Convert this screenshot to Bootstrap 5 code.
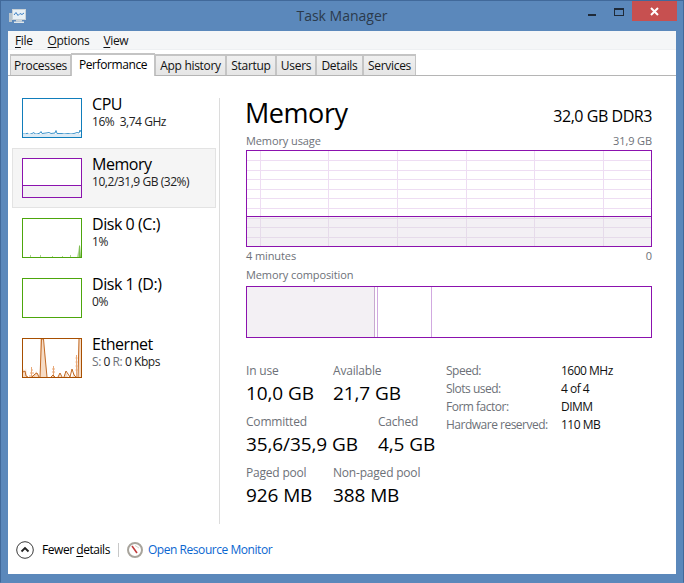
<!DOCTYPE html>
<html lang="en"><head><meta charset="utf-8"><title>Task Manager</title>
<link href="https://cdn.jsdelivr.net/npm/bootstrap@5.3.0/dist/css/bootstrap.min.css" rel="stylesheet">
<style>
html,body{margin:0;height:583px;width:684px;overflow:hidden;background:#5b88bb}
body{font-family:"Open Sans","Noto Sans",sans-serif;font-size:12px;line-height:16px;color:#000;letter-spacing:-.35px}
.tm-frame{height:583px;background:#5b88bb;border:1px solid #41699a;border-bottom-color:#5b88bb;padding:0 7px 8px}
.tm-title{height:30px;position:relative}
.tm-title-text{font-size:14px;color:#2b3a4c;padding-top:5px;line-height:20px;letter-spacing:0}
.tm-appicon{position:absolute;left:1px;top:7px}
.tm-ctl{position:absolute;top:0}
.tm-close{left:624px;top:0;width:45px;height:20px;background:#c75050;color:#fff}
.tm-min{left:580px;top:13px;width:8px;height:2px;background:#1f2a38}
.tm-max{left:606px;top:7px;width:10px;height:8px;border:1px solid #1f2a38;border-top-width:2px}
.tm-client{background:#fff;height:543px;display:flex;flex-direction:column}
.tm-menu{height:19px;background:#f5f6f7;padding:2px 0 0 7px;gap:14px;border-bottom:1px solid #eef0f2;color:#111}
.tm-menu span:nth-child(2){margin-left:1px}
.tm-menu u,.tm-foot u{text-underline-offset:2px}
.tm-tabs{height:26px;padding:3px 0 0 2px;border-bottom:1px solid #b5b5b5;flex-wrap:nowrap;align-items:flex-end}
.tm-tab{height:21px;border:2px solid #c4c4c4;border-bottom:0;border-left-width:1px;border-right-width:1px;background:linear-gradient(#f0f0f0,#e5e5e5);color:#111;padding-top:2px;text-align:center;white-space:nowrap;letter-spacing:-.3px}
.tm-tab:nth-child(1){width:61px}
.tm-tab:nth-child(2){width:84px}
.tm-tab:nth-child(3){width:71px}
.tm-tab:nth-child(4){width:50px}
.tm-tab:nth-child(5){width:40px}
.tm-tab:nth-child(6){width:47px}
.tm-tab:nth-child(7){width:53px}
.tm-tab.tm-tab-on{background:#fff;margin-bottom:-1px;height:23px;padding-top:2px;color:#000;letter-spacing:-.4px}
.tm-body{height:450px;flex:none;display:flex;padding-top:12px}
.tm-side{width:211px;padding-left:4px}
.tm-vr{width:1px;background:#dcdcdc;margin-top:10px;height:426px}
.tm-item{height:60px;width:204px;display:flex;padding:9px 0 0 9px;border:1px solid transparent}
.tm-item-on{background:#f5f5f5;border-color:#e3e3e3}
.tm-item-name{font-size:16px;line-height:20px;margin-top:-4px;letter-spacing:-.45px}
.tm-item-sub{line-height:16px;color:#222;letter-spacing:-.45px}
.tm-item-txt{margin-left:10px}
.tm-thumb{display:block}
.tm-muted{color:#6d7178}
.tm-main{margin-left:26px;width:406px}
.tm-h{height:45px;align-items:flex-start}
.tm-h1{font-size:27px;line-height:32px;margin:9px 0 0 -1px;letter-spacing:-.45px;font-weight:400}
.tm-h2{font-size:16px;line-height:20px;padding-top:18px;letter-spacing:-.45px}
.tm-cap{height:17px;line-height:16px;font-size:11px;color:#6d7178;letter-spacing:-.1px}
.tm-cap-b{margin-top:1px;height:16px}
.tm-cap-c{margin-top:3px;height:19px}
.tm-graph{display:block}
.tm-stats{margin-top:25px;display:flex}
.tm-col-l{width:200px}
.tm-pair{display:flex;height:51px}
.tm-w-a{width:87px}
.tm-w-b{width:132px}
.tm-lbl{color:#6d7178;line-height:16px;letter-spacing:-.2px}
.tm-val{font-size:19px;line-height:24px;margin-top:2px;letter-spacing:-.1px;white-space:nowrap}
.tm-specs{display:grid;grid-template-columns:115px auto;grid-auto-rows:18px;line-height:16px;height:72px;margin:0;letter-spacing:-.5px}
.tm-specs dt{font-weight:400;color:#6d7178;margin:0}
.tm-specs dd{margin:0;color:#111}
.tm-foot{flex:1;padding-left:8px;align-items:center;letter-spacing:-.45px}
.tm-sep{width:1px;height:14px;background:#c8c8c8;margin:0 8px 0 8px}
.tm-link{color:#0a66d0;text-decoration:none;margin-left:5px}
</style></head>
<body>
<div class="tm-frame d-flex flex-column">
  <div class="tm-title">
    <svg class="tm-appicon" width="18" height="16" viewBox="0 0 18 16"><rect x="0" y="5" width="3" height="9" fill="#b8c4cc"/><rect x="3.5" y="1.5" width="13" height="10" fill="#e9f1f6" stroke="#c9d2d8"/><path d="M5 7 7 4.500 9 7.500 11 5.500 13 6.500 15 5" fill="none" stroke="#3b7fc4"/><rect x="7" y="12" width="6" height="1.500" fill="#c9d2d8"/><rect x="5" y="13.500" width="10" height="1.500" fill="#dfe6ea"/></svg>
    <div class="tm-title-text text-center">Task Manager</div>
    <div class="tm-ctl tm-min"></div>
    <div class="tm-ctl tm-max"></div>
    <div class="tm-ctl tm-close d-flex align-items-center justify-content-center"><svg width="9" height="9" viewBox="0 0 9 9"><path d="M1 1 8 8M8 1 1 8" stroke="#fff" stroke-width="2"/></svg></div>
  </div>
  <div class="tm-client">
    <div class="tm-menu d-flex"><span><u>F</u>ile</span><span><u>O</u>ptions</span><span><u>V</u>iew</span></div>
    <div class="tm-tabs nav d-flex">
      <div class="tm-tab">Processes</div>
      <div class="tm-tab tm-tab-on">Performance</div>
      <div class="tm-tab">App history</div>
      <div class="tm-tab">Startup</div>
      <div class="tm-tab">Users</div>
      <div class="tm-tab">Details</div>
      <div class="tm-tab">Services</div>
    </div>
    <div class="tm-body">
      <div class="tm-side">
        <div class="tm-item">
          <svg class="tm-thumb" width="60" height="40" viewBox="0 0 60 40"><rect x=".5" y=".5" width="59" height="39" fill="#fff"/><path d="M1 36 4 36 5 35 7 36.500 10 35.500 12 34.500 13 36 15 36 18 35 19 33.500 20 35.500 24 35 27 34.500 29 35.500 33 35 34 32.500 35 35.500 40 35.500 42 36 46 35.500 49 36 52 35.500 55 34.500 57 35 58 32 59 34" fill="none" stroke="#3f95cc"/><path d="M1 36h58v3H1z" fill="#dcebf5"/><rect x=".5" y=".5" width="59" height="39" fill="none" stroke="#117dbb"/></svg>
          <div class="tm-item-txt"><div class="tm-item-name">CPU</div><div class="tm-item-sub">16%&nbsp; 3,74 GHz</div></div>
        </div>
        <div class="tm-item tm-item-on">
          <svg class="tm-thumb" width="60" height="40" viewBox="0 0 60 40"><rect x=".5" y=".5" width="59" height="39" fill="#fff"/><rect x="1" y="27" width="58" height="12" fill="#f3f0f4"/><path d="M1 27.500H59" stroke="#8b12ae"/><rect x=".5" y=".5" width="59" height="39" fill="none" stroke="#8b12ae"/></svg>
          <div class="tm-item-txt"><div class="tm-item-name">Memory</div><div class="tm-item-sub">10,2/31,9 GB (32%)</div></div>
        </div>
        <div class="tm-item">
          <svg class="tm-thumb" width="60" height="40" viewBox="0 0 60 40"><rect x=".5" y=".5" width="59" height="39" fill="#fff"/><path d="M8.500 39v-2M30.500 39v-1M40.500 39v-1M48.500 39v-2M18.500 39v-2" stroke="#a9d38b"/><path d="M56 39 57 28 58 27 59 39z" fill="#7fbd55"/><path d="M55 39 56 34 57 39z" fill="#b9dca0"/><rect x=".5" y=".5" width="59" height="39" fill="none" stroke="#4da60c"/></svg>
          <div class="tm-item-txt"><div class="tm-item-name">Disk 0 (C:)</div><div class="tm-item-sub">1%</div></div>
        </div>
        <div class="tm-item">
          <svg class="tm-thumb" width="60" height="40" viewBox="0 0 60 40"><rect x=".5" y=".5" width="59" height="39" fill="#fff" stroke="#4da60c"/></svg>
          <div class="tm-item-txt"><div class="tm-item-name">Disk 1 (D:)</div><div class="tm-item-sub">0%</div></div>
        </div>
        <div class="tm-item">
          <svg class="tm-thumb" width="60" height="40" viewBox="0 0 60 40"><rect x=".5" y=".5" width="59" height="39" fill="#fff"/><path d="M1 39V31L3 34 4 30 5 39H12L14 33 16 36 18 39V1H21L23 15 25 39H29L31 36 33 39H36L38 36 39 39H42L44 34 46 39H50L52 35 54 39H56V28L57 1H59V39Z" fill="#f6dcc6"/><path d="M9.500 39V29M9 32H11M8 35H12M7 38H13M31.500 39V28M30 31H33M30 34H33M54.500 39V17M53.500 20H55.500M53.500 24H55.500M53.500 28H55.500M53.500 32H55.500" stroke="#e8a878" fill="none"/><path d="M1 34 3 33 4 38 6 39M10 39 13 36 15 35 17 39M18 39 19.500 1 21.500 1 23 18 25 39M29 39 31 37 33 39M36 39 38 35 40 39M42 39 44 33 46 36 48 39M48 39 50 31 52 37 54 39M56 39 57 1" stroke="#c26a24" fill="none"/><rect x=".5" y=".5" width="59" height="39" fill="none" stroke="#a74f01"/></svg>
          <div class="tm-item-txt"><div class="tm-item-name">Ethernet</div><div class="tm-item-sub"><span class="tm-muted">S:</span> 0 <span class="tm-muted">R:</span> 0 Kbps</div></div>
        </div>
      </div>
      <div class="tm-vr"></div>
      <div class="tm-main">
        <div class="tm-h d-flex justify-content-between"><h1 class="tm-h1">Memory</h1><div class="tm-h2">32,0 GB DDR3</div></div>
        <div class="tm-cap d-flex justify-content-between"><span>Memory usage</span><span>31,9 GB</span></div>
        <svg class="tm-graph" width="406" height="97" viewBox="0 0 406 97">
          <rect x=".5" y=".5" width="405" height="96" fill="#fff"/>
          <rect x="1" y="66" width="404" height="30" fill="#f3f0f4"/>
          <path d="M1 10.500H405M1 20.500H405M1 29.500H405M1 39.500H405M1 48.500H405M1 58.500H405M14.500 1V66M82.500 1V66M151.500 1V66M220.500 1V66M288.500 1V66M357.500 1V66" stroke="#eeddf3"/>
          <path d="M1 68.500H405M1 77.500H405M1 87.500H405M14.500 67V96M82.500 67V96M151.500 67V96M220.500 67V96M288.500 67V96M357.500 67V96" stroke="#e6dbea"/>
          <path d="M1 66.500H405" stroke="#8b12ae"/>
          <rect x=".5" y=".5" width="405" height="96" fill="none" stroke="#8b12ae"/>
        </svg>
        <div class="tm-cap tm-cap-b d-flex justify-content-between"><span>4 minutes</span><span>0</span></div>
        <div class="tm-cap tm-cap-c">Memory composition</div>
        <svg class="tm-graph" width="406" height="52" viewBox="0 0 406 52">
          <rect x=".5" y=".5" width="405" height="51" fill="#fff"/>
          <rect x="1" y="1" width="128" height="50" fill="#f3f0f4"/>
          <path d="M128.500 1V51" stroke="#c8a8d0"/><path d="M131.500 1V51M185.500 1V51" stroke="#d1a9e0"/>
          <rect x=".5" y=".5" width="405" height="51" fill="none" stroke="#8b12ae"/>
        </svg>
        <div class="tm-stats">
          <div class="tm-col-l">
            <div class="tm-pair"><div class="tm-w-a"><div class="tm-lbl">In use</div><div class="tm-val">10,0 GB</div></div><div><div class="tm-lbl">Available</div><div class="tm-val">21,7 GB</div></div></div>
            <div class="tm-pair"><div class="tm-w-b"><div class="tm-lbl">Committed</div><div class="tm-val">35,6/35,9 GB</div></div><div><div class="tm-lbl">Cached</div><div class="tm-val">4,5 GB</div></div></div>
            <div class="tm-pair"><div class="tm-w-a"><div class="tm-lbl">Paged pool</div><div class="tm-val">926 MB</div></div><div><div class="tm-lbl">Non-paged pool</div><div class="tm-val">388 MB</div></div></div>
          </div>
          <dl class="tm-specs">
            <dt>Speed:</dt><dd>1600 MHz</dd>
            <dt>Slots used:</dt><dd>4 of 4</dd>
            <dt>Form factor:</dt><dd>DIMM</dd>
            <dt>Hardware reserved:</dt><dd>110 MB</dd>
          </dl>
        </div>
      </div>
    </div>
    <div class="tm-foot d-flex">
      <svg width="18" height="18" viewBox="0 0 18 18"><circle cx="9" cy="9" r="8.300" fill="#fff" stroke="#3a3a3a"/><path d="M5.500 10.500 9 7 12.500 10.500" fill="none" stroke="#222" stroke-width="1.800"/></svg>
      <span class="ms-2">Fewer <u>d</u>etails</span>
      <span class="tm-sep"></span>
      <svg width="16" height="16" viewBox="0 0 16 16"><circle cx="8" cy="8" r="7" fill="#fff" stroke="#a8a49c" stroke-width="2"/><path d="M5 4 10 11" stroke="#c23b3b" stroke-width="1.600"/><path d="M8 3.500 12 6" stroke="#d9d4cc"/></svg>
      <a class="tm-link" href="#">Open Resource Monitor</a>
    </div>
  </div>
</div>
<script src="https://cdn.jsdelivr.net/npm/bootstrap@5.3.0/dist/js/bootstrap.bundle.min.js"></script>
</body></html>
